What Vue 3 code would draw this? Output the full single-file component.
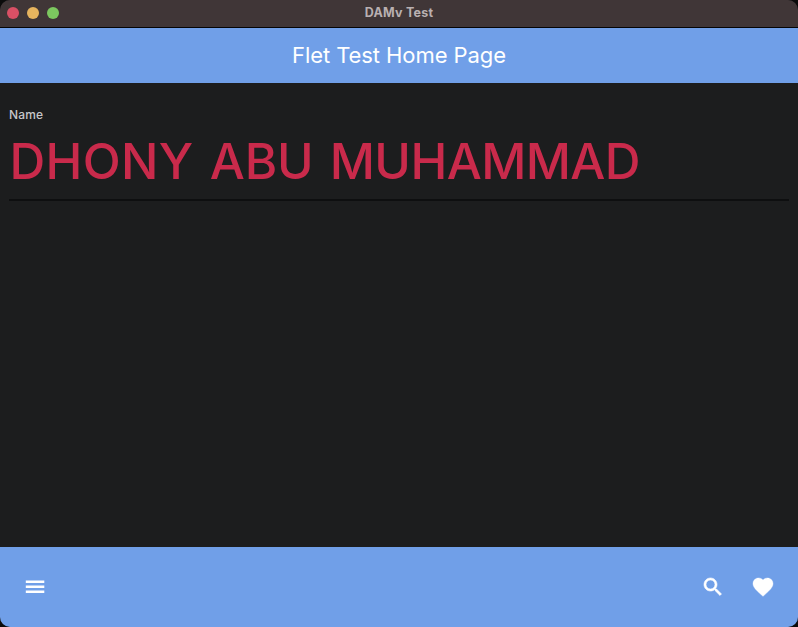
<script setup>
const title = 'DAMv Test'
const heading = 'Flet Test Home Page'
const label = 'Name'
const words = [
  { text: 'DHONY', spacing: 0.3 },
  { text: 'ABU', spacing: -0.1 },
  { text: 'MUHAMMAD', spacing: -0.6 }
]
</script>

<template>
  <div class="desktop">
    <div class="window">
      <header class="titlebar">
        <div class="lights">
          <span class="light close"></span>
          <span class="light minimize"></span>
          <span class="light zoom"></span>
        </div>
        <span class="window-title">{{ title }}</span>
      </header>
      <div class="appbar"><span class="heading">{{ heading }}</span></div>
      <main class="content">
        <div class="field">
          <label class="label">{{ label }}</label>
          <div class="value"><template v-for="(word, i) in words" :key="i"><span :style="{ letterSpacing: word.spacing + 'px' }">{{ word.text }}</span>{{ ' ' }}</template></div>
        </div>
      </main>
      <nav class="bottombar">
        <svg class="icon" viewBox="0 0 24 24"><path d="M2.8 5.4h18.5v2.6H2.8zM2.8 10.4h18.5v2.6H2.8zM2.8 15.4h18.5v2.6H2.8z" /></svg>
        <span class="spacer"></span>
        <svg class="icon outlined" viewBox="0 0 24 24"><path d="M15.5 14h-.79l-.28-.27C15.41 12.59 16 11.11 16 9.5 16 5.91 13.09 3 9.5 3S3 5.91 3 9.5 5.91 16 9.5 16c1.61 0 3.09-.59 4.23-1.57l.27.28v.79l5 4.99L20.49 19l-4.99-5zm-6 0C7.01 14 5 11.99 5 9.5S7.01 5 9.5 5 14 7.01 14 9.5 11.99 14 9.5 14z" /></svg>
        <svg class="icon outlined heart" viewBox="0 0 24 24"><path d="M12 21.35l-1.45-1.32C5.4 15.36 2 12.28 2 8.5 2 5.42 4.42 3 7.5 3c1.74 0 3.41.81 4.5 2.09C13.09 3.81 14.76 3 16.5 3 19.58 3 22 5.42 22 8.5c0 3.78-3.4 6.86-8.55 11.54L12 21.35z" /></svg>
      </nav>
    </div>
  </div>
</template>

<style>
body {
  background: #0b0b0b;
}
</style>

<style scoped>
.desktop {
  height: 627px;
  background: #0b0b0b;
  overflow: hidden;
}
.window {
  box-sizing: border-box;
  display: flex;
  flex-direction: column;
  height: 627px;
  border-radius: 10px;
  overflow: hidden;
  background: #1c1d1e;
  font-family: Inter, "Liberation Sans", sans-serif;
}
.titlebar {
  box-sizing: border-box;
  display: grid;
  grid-template-columns: 1fr auto 1fr;
  align-items: center;
  height: 28px;
  padding: 0 7px 1px;
  background: #403637;
  border-bottom: 1px solid #050505;
}
.lights {
  display: flex;
  gap: 8px;
}
.light {
  width: 12px;
  height: 12px;
  border-radius: 50%;
}
.close {
  background: #d95065;
}
.minimize {
  background: #e6b45e;
}
.zoom {
  background: #7cc85f;
}
.window-title {
  color: #b9b0b1;
  font-size: 12.5px;
  line-height: 16px;
  font-weight: 700;
  letter-spacing: 0.25px;
  padding-bottom: 1px;
}
.appbar {
  display: flex;
  align-items: center;
  justify-content: center;
  height: 55px;
  background: #709fe8;
}
.heading {
  color: #fff;
  font-size: 22px;
  line-height: 28px;
  font-weight: 430;
  letter-spacing: -0.08px;
  padding-bottom: 2px;
  white-space: nowrap;
}
.content {
  flex: 1;
  padding: 24px 9px 0;
}
.field {
  border-bottom: 2px solid #0e0f10;
  height: 92px;
}
.label {
  display: block;
  color: #c6c7ca;
  font-size: 12px;
  line-height: 16px;
  font-weight: 500;
  letter-spacing: 0.15px;
}
.value {
  color: #c92a4b;
  font-size: 49.5px;
  line-height: 60px;
  font-weight: 450;
  word-spacing: 3px;
  padding: 8px 0 0 0.5px;
  white-space: nowrap;
}
.bottombar {
  box-sizing: border-box;
  display: flex;
  align-items: center;
  height: 80px;
  padding: 0 23px;
  background: #709fe8;
}
.spacer {
  flex: 1;
}
.icon {
  width: 24px;
  height: 24px;
  fill: #fff;
}
.outlined {
  stroke: #fff;
  stroke-width: 0.6px;
}
.heart {
  margin-left: 26px;
  stroke-width: 0.4px;
}
</style>
